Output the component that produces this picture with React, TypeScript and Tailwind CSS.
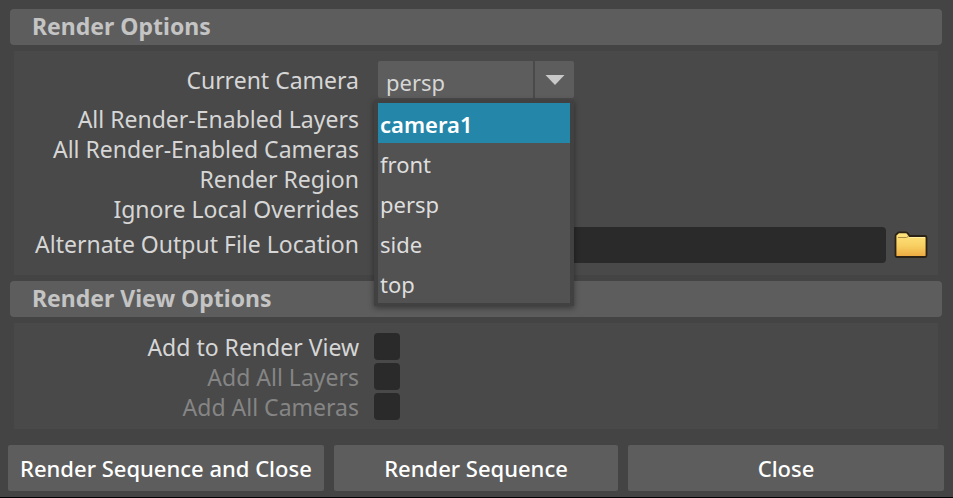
import React, { FC, ReactNode, useState } from "react";

const cameras = ["camera1", "front", "persp", "side", "top"];

interface SectionProps {
  title: string;
  children: ReactNode;
}

const Section: FC<SectionProps> = ({ title, children }) => (
  <section className="mb-1.5">
    <h2 className="h-9 px-[22px] mb-1.5 rounded-sm bg-[#5d5d5d] text-[23px] leading-[34px] font-bold text-[#c4c4c4]">
      {title}
    </h2>
    <div className="mx-1 bg-[#494949] text-[#d6d6d6]">{children}</div>
  </section>
);

interface CheckRowProps {
  id: string;
  label: string;
  disabled?: boolean;
}

const CheckRow: FC<CheckRowProps> = ({ id, label, disabled }) => (
  <div className="flex items-start h-[30px]">
    <label
      htmlFor={id}
      className={
        disabled
          ? "w-[345px] mr-[15px] text-right text-[23px] leading-7 text-[#858585]"
          : "w-[345px] mr-[15px] text-right text-[23px] leading-7"
      }
    >
      {label}
    </label>
    <input
      id={id}
      type="checkbox"
      disabled={disabled}
      className="w-[26px] h-[27px] rounded-sm appearance-none bg-[#2a2a2a] checked:bg-[#5285a6]"
    />
  </div>
);

const FolderIcon: FC = () => (
  <svg viewBox="0 0 34 28" className="w-[34px] h-7" aria-hidden="true">
    <defs>
      <linearGradient id="folder" x1="0" y1="0" x2="0" y2="1">
        <stop offset="0" stopColor="#ffe680" />
        <stop offset="0.55" stopColor="#f8cf61" />
        <stop offset="1" stopColor="#eda940" />
      </linearGradient>
    </defs>
    <path
      d="M1.5 5Q1.5 3.500 2.800 3L4.500 1.300H12Q13 1.300 13.800 2.500L15.500 5H31Q32.500 5 32.500 6.500V24.500Q32.500 26 31 26H3Q1.500 26 1.500 24.500Z"
      fill="url(#folder)"
      stroke="#2b2114"
      strokeWidth="1.8"
      strokeLinejoin="round"
    />
    <path d="M4 6.500H12.500L14.500 5.200" fill="none" stroke="#a88b40" strokeWidth="1" />
    <path d="M15.500 6.500H31" stroke="#fff0a0" strokeWidth="1" />
  </svg>
);

const buttonClass =
  "h-[46px] rounded-xs bg-[#5d5d5d] text-white font-medium whitespace-nowrap";

const App: FC = () => {
  const [camera, setCamera] = useState("persp");
  const [open, setOpen] = useState(true);

  return (
    <div className="min-h-screen pl-2 pr-[9px] pt-[9px] pb-1.5 bg-[#444444] border-b border-black font-['Noto_Sans',sans-serif] text-[22px] leading-[30px]">
      <div className="mx-0.5">
        <Section title="Render Options">
          <div className="pt-2.5 pb-3">
            <div className="flex items-start h-11">
              <label
                htmlFor="camera"
                className="w-[345px] mr-[15px] text-right text-[23px] leading-[38px]"
              >
                Current Camera
              </label>
              <div className="relative ml-1">
                <div className="flex w-[196px] h-[37px] rounded-xs bg-[#5d5d5d]">
                  <select
                    id="camera"
                    value={camera}
                    onChange={(e) => setCamera(e.target.value)}
                    className="w-full pt-1 pl-2 appearance-none outline-none"
                  >
                    {cameras.map((name) => (
                      <option key={name}>{name}</option>
                    ))}
                  </select>
                  <button
                    type="button"
                    aria-label="Show cameras"
                    onClick={() => setOpen(!open)}
                    className="flex items-center justify-center w-[41px] shrink-0 border-l-2 border-[#4a4a4a]"
                  >
                    <svg viewBox="0 0 20 10" className="w-5 h-2.5">
                      <path d="M0.500 0H19.500L10 10Z" fill="#c8c8c8" />
                    </svg>
                  </button>
                </div>
                {open && (
                  <ul
                    role="listbox"
                    aria-label="Cameras"
                    className="absolute z-10 top-[39px] -left-1 w-[200px] px-1 pt-[3px] pb-[3px] bg-[#414141] shadow-[0_2px_6px_rgba(0,0,0,0.4)]"
                  >
                    {cameras.map((name, i) => (
                      <li
                        key={name}
                        role="option"
                        aria-selected={i === 0}
                        onClick={() => {
                          setCamera(name);
                          setOpen(false);
                        }}
                        className={
                          i === 0
                            ? "h-10 pt-0.5 px-0.5 leading-[38px] bg-[#2487aa] text-white font-semibold"
                            : "h-10 pt-0.5 px-0.5 leading-[38px] bg-[#525252] text-[#dedede]"
                        }
                      >
                        {name}
                      </li>
                    ))}
                  </ul>
                )}
              </div>
            </div>
            <CheckRow id="layers" label="All Render-Enabled Layers" />
            <CheckRow id="cameras" label="All Render-Enabled Cameras" />
            <CheckRow id="region" label="Render Region" />
            <CheckRow id="overrides" label="Ignore Local Overrides" />
            <div className="flex items-center h-9 mt-0.5 pr-2.5">
              <label
                htmlFor="location"
                className="w-[345px] h-9 mr-[15px] text-right text-[23px] leading-[34px] whitespace-nowrap"
              >
                Alternate Output File Location
              </label>
              <input
                id="location"
                type="text"
                className="flex-1 min-w-0 h-9 px-2 rounded-sm bg-[#2a2a2a] outline-none"
              />
              <button type="button" aria-label="Browse" className="ml-2">
                <FolderIcon />
              </button>
            </div>
          </div>
        </Section>
        <Section title="Render View Options">
          <div className="pt-2.5 pb-1.5">
            <CheckRow id="add-view" label="Add to Render View" />
            <CheckRow id="add-layers" label="Add All Layers" disabled />
            <CheckRow id="add-cameras" label="Add All Cameras" disabled />
          </div>
        </Section>
      </div>
      <div className="grid grid-cols-[10fr_9fr_10fr] gap-2.5 mt-4">
        <button type="button" className={buttonClass}>
          Render Sequence and Close
        </button>
        <button type="button" className={buttonClass}>
          Render Sequence
        </button>
        <button type="button" className={buttonClass}>
          Close
        </button>
      </div>
    </div>
  );
};

export default App;
